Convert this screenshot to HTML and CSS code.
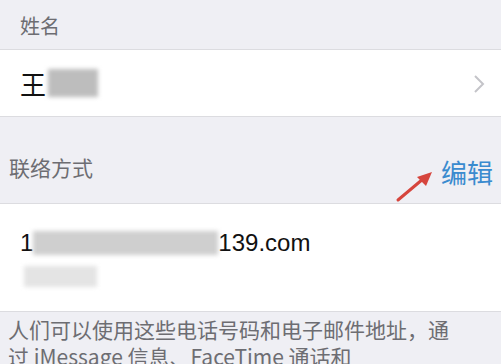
FILE: index.html
```html
<!DOCTYPE html>
<html lang="zh">
<head>
<meta charset="utf-8">
<link rel="stylesheet" href="styles.css">
</head>
<body>
<div class="page">
  <div class="group-head name-head"><span>姓名</span></div>
  <div class="row name-row">
    <div class="name-text">王<span class="blur blur-name"></span></div>
    <svg class="chevron" width="12" height="20" viewBox="0 0 12 20"><path d="M2 2 L10 10 L2 18" fill="none" stroke="#c4c4c9" stroke-width="2"/></svg>
  </div>
  <div class="group-head contact-head">
    <span class="contact-label">联络方式</span>
    <span class="edit-wrap">
      <svg class="arrow" width="40" height="34" viewBox="0 0 40 34"><path d="M3 31 L28 10" stroke="#d6453d" stroke-width="3" stroke-linecap="round"/><path d="M37 3 L22 8 L31 17 Z" fill="#d6453d"/></svg>
      <span class="edit">编辑</span>
    </span>
  </div>
  <div class="row email-row">
    <div class="email">1<span class="blur blur-email"></span>139.com</div>
    <div class="blur blur-sub"></div>
  </div>
  <div class="footer">人们可以使用这些电话号码和电子邮件地址，通<br>过 iMessage 信息、FaceTime 通话和</div>
</div>
</body>
</html>
```
FILE: styles.css
```css
html, body {
  margin: 0;
  padding: 0;
  background: #efeff4;
  overflow: hidden;
}
.page {
  width: 501px;
  height: 364px;
  overflow: hidden;
  font-family: "Noto Sans CJK SC", "Liberation Sans", sans-serif;
}
.group-head {
  background: #efeff4;
  color: #6d6d72;
  display: flex;
  box-sizing: border-box;
  border-bottom: 1px solid #dcdce0;
}
.name-head {
  height: 50px;
  padding-left: 20px;
  padding-top: 12px;
  font-size: 20px;
  line-height: 28px;
}
.row {
  background: #fff;
  box-sizing: border-box;
}
.name-row {
  height: 67px;
  display: flex;
  align-items: center;
  justify-content: space-between;
  padding: 0 16px 0 20px;
  border-bottom: 1px solid #dcdce0;
}
.name-text {
  font-size: 26px;
  color: #111;
  display: flex;
  align-items: center;
}
.blur {
  display: inline-block;
  background: #c9c9c9;
  filter: blur(2px);
}
.blur-name {
  width: 50px;
  height: 28px;
  margin-left: 2px;
  background: #bdbdbd;
}
.chevron {
  margin-top: 2px;
}
.contact-head {
  height: 87px;
  padding: 0 8px 0 9px;
  align-items: flex-end;
  justify-content: space-between;
  padding-bottom: 18px;
}
.contact-label {
  font-size: 21px;
  line-height: 30px;
  margin-bottom: 3px;
}
.edit-wrap {
  display: flex;
  align-items: flex-end;
  margin-bottom: -4px;
}
.arrow {
  margin-right: 6px;
  margin-bottom: -14px;
}
.edit {
  color: #3a8bcf;
  font-size: 26px;
  line-height: 34px;
}
.email-row {
  height: 108px;
  padding: 22px 0 0 20px;
  border-bottom: 1px solid #dcdce0;
}
.email {
  font-family: "Liberation Sans", sans-serif;
  font-size: 24px;
  line-height: 34px;
  color: #111;
  display: flex;
  align-items: center;
}
.blur-email {
  width: 185px;
  height: 24px;
  background: #cfcfcf;
}
.blur-sub {
  display: block;
  width: 73px;
  height: 21px;
  margin: 6px 0 0 4px;
  background: #e4e4e4;
}
.footer {
  padding: 4px 10px 0 8px;
  font-size: 21px;
  line-height: 27px;
  color: #6d6d72;
}
```
